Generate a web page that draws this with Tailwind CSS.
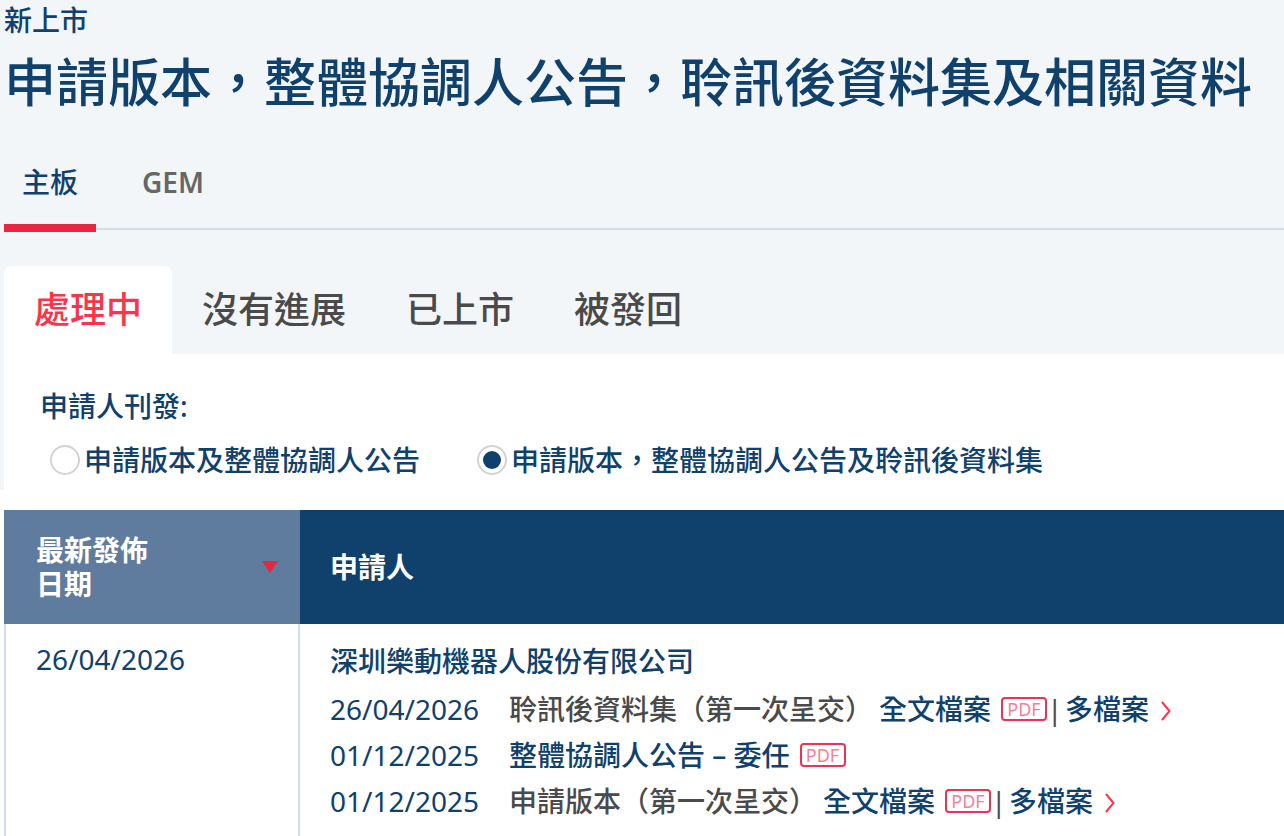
<!DOCTYPE html>
<html lang="zh-HK">
  <head>
    <meta charset="UTF-8" />
    <meta name="viewport" content="width=device-width, initial-scale=1.0" />
    <title>申請版本，整體協調人公告，聆訊後資料集及相關資料</title>
    <script src="https://cdn.jsdelivr.net/npm/@tailwindcss/browser@4"></script>
  </head>
  <body
    class="bg-white font-['Noto_Sans','Noto_Sans_CJK_TC',sans-serif] text-[28px] leading-[34px] text-[#10416c]"
  >
    <svg class="hidden">
      <symbol id="chevron" viewBox="0 0 10 20">
        <path d="M1 1l7.500 9L1 19" fill="none" stroke="#fb3449" stroke-width="2" />
      </symbol>
    </svg>

    <main class="font-medium">
      <div class="bg-[#f2f6f9] pl-1">
        <!-- heading -->
        <header class="pt-[3px]">
          <p>新上市</p>
          <h1 class="mt-2 text-[52px] leading-[74px] whitespace-nowrap">
            申請版本，整體協調人公告，聆訊後資料集及相關資料
          </h1>
        </header>

        <!-- board tabs -->
        <nav class="mt-[46px] relative flex gap-7">
          <div class="absolute inset-x-0 bottom-0.5 h-0.5 bg-[#d2dde7]"></div>
          <a href="#main" class="relative px-[18px] pb-[25px] border-b-8 border-[#ea2542]">主板</a>
          <a href="#gem" class="px-[18px] font-semibold text-[#666]">GEM</a>
        </nav>

        <!-- status tabs -->
        <div class="mt-[34px] flex text-[36px] leading-[88px] text-[#4a4a4a]">
          <button class="px-[30px] rounded-t-lg bg-white text-[#fb3449]">處理中</button>
          <button class="px-[30px]">沒有進展</button>
          <button class="px-[30px]">已上市</button>
          <button class="px-[30px]">被發回</button>
        </div>

        <!-- filter -->
        <fieldset class="bg-white pl-9 pt-[35px] pb-[13px]">
          <legend class="float-left">申請人刊發:</legend>
          <div class="clear-both pt-5 pl-2.5 flex gap-[57px]">
            <label class="flex items-center gap-1">
              <input
                type="radio"
                name="issued"
                class="appearance-none size-[30px] p-1 rounded-full border-2 border-[#d3d3d3] bg-clip-content checked:bg-[#10416c]"
              />
              申請版本及整體協調人公告
            </label>
            <label class="flex items-center gap-1">
              <input
                type="radio"
                name="issued"
                checked
                class="appearance-none size-[30px] p-1 rounded-full border-2 border-[#d3d3d3] bg-clip-content checked:bg-[#10416c]"
              />
              申請版本，整體協調人公告及聆訊後資料集
            </label>
          </div>
        </fieldset>
      </div>

      <!-- applicants -->
      <div class="pl-1 pt-5">
        <table class="w-full table-fixed border-separate border-spacing-0 text-left">
          <thead class="text-white">
            <tr class="h-[114px]">
              <th class="w-[296px] bg-[#5f7b9e] pl-8 pr-[22px] font-bold">
                <div class="flex items-center justify-between">
                  <span>最新發佈<br />日期</span>
                  <svg class="w-4 h-3" viewBox="0 0 16 12"><path d="M0 0h16L8 12z" fill="#ea2542" /></svg>
                </div>
              </th>
              <th class="bg-[#10416c] pl-[30px] font-bold">申請人</th>
            </tr>
          </thead>
          <tbody>
            <tr class="align-top">
              <td class="border-x-2 border-[#d2dde7] pl-[30px] pt-[18px] font-normal">26/04/2026</td>
              <td class="pl-[30px] pt-5 pb-3 whitespace-nowrap">
                <p class="mb-2">深圳樂動機器人股份有限公司</p>
                <ul class="leading-[46px]">
                  <li class="flex items-center">
                    <time class="mr-[30px] font-normal">26/04/2026</time>
                    <span class="mr-1.5 text-[#4a4a4a]">聆訊後資料集（第一次呈交）</span>
                    <a href="#full" class="flex items-center gap-2.5">全文檔案
                      <span class="w-[46px] h-6 rounded-sm border-2 border-[#ee3350] text-center text-[18px] leading-5 font-normal text-[#f87f93]">PDF</span></a>
                    <span class="w-[18px] font-normal text-[#4a4a4a]">|</span>
                    <a href="#multi" class="flex items-center gap-3">多檔案
                      <svg class="mt-1 w-2.5 h-5"><use href="#chevron" /></svg></a>
                  </li>
                  <li class="flex items-center">
                    <time class="mr-[30px] font-normal">01/12/2025</time>
                    <a href="#oc" class="flex items-center gap-2.5">整體協調人公告 – 委任
                      <span class="w-[46px] h-6 rounded-sm border-2 border-[#ee3350] text-center text-[18px] leading-5 font-normal text-[#f87f93]">PDF</span></a>
                  </li>
                  <li class="flex items-center">
                    <time class="mr-[30px] font-normal">01/12/2025</time>
                    <span class="mr-1.5 text-[#4a4a4a]">申請版本（第一次呈交）</span>
                    <a href="#full" class="flex items-center gap-2.5">全文檔案
                      <span class="w-[46px] h-6 rounded-sm border-2 border-[#ee3350] text-center text-[18px] leading-5 font-normal text-[#f87f93]">PDF</span></a>
                    <span class="w-[18px] font-normal text-[#4a4a4a]">|</span>
                    <a href="#multi" class="flex items-center gap-3">多檔案
                      <svg class="mt-1 w-2.5 h-5"><use href="#chevron" /></svg></a>
                  </li>
                </ul>
              </td>
            </tr>
          </tbody>
        </table>
      </div>
    </main>
  </body>
</html>
